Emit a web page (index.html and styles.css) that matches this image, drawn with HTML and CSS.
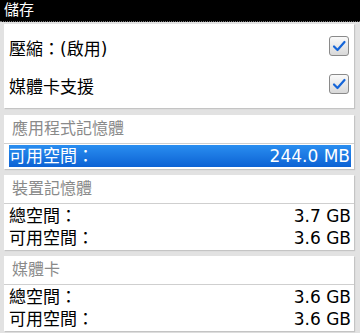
FILE: index.html
```html
<!DOCTYPE html>
<html lang="zh-Hant">
<head>
<meta charset="UTF-8">
<meta name="viewport" content="width=device-width, initial-scale=1.0">
<title>儲存</title>
<link rel="stylesheet" href="styles.css">
</head>
<body>
<div class="titlebar">儲存</div>

<div class="list">
  <div class="card opts">
    <div class="opt">
      <span>壓縮：(啟用)</span>
      <span class="check"><svg viewBox="0 0 18 18" width="18" height="18"><path d="M4 9.5 L7.5 13 L14.5 5" fill="none" stroke="#1565d8" stroke-width="2.2" stroke-linecap="round" stroke-linejoin="round"/></svg></span>
    </div>
    <div class="opt">
      <span>媒體卡支援</span>
      <span class="check"><svg viewBox="0 0 18 18" width="18" height="18"><path d="M4 9.5 L7.5 13 L14.5 5" fill="none" stroke="#1565d8" stroke-width="2.2" stroke-linecap="round" stroke-linejoin="round"/></svg></span>
    </div>
  </div>

  <div class="card">
    <div class="head">應用程式記憶體</div>
    <div class="rows single">
      <div class="row sel"><span>可用空間：</span><span>244.0 MB</span></div>
    </div>
  </div>

  <div class="card">
    <div class="head">裝置記憶體</div>
    <div class="rows">
      <div class="row"><span>總空間：</span><span>3.7 GB</span></div>
      <div class="row"><span>可用空間：</span><span>3.6 GB</span></div>
    </div>
  </div>

  <div class="card">
    <div class="head">媒體卡</div>
    <div class="rows">
      <div class="row"><span>總空間：</span><span>3.6 GB</span></div>
      <div class="row"><span>可用空間：</span><span>3.6 GB</span></div>
    </div>
  </div>
</div>
</body>
</html>
```
FILE: styles.css
```css
body{margin:0;background:#e2e2e2;font-family:"DejaVu Sans","Noto Sans CJK TC",sans-serif;color:#000;height:333px;overflow:hidden;}
.titlebar{background:#000;color:#fff;font-size:15px;height:21px;line-height:20px;padding-left:4px;border-bottom:1px dotted #777;}
.list{display:flex;flex-direction:column;gap:6px;padding:2px 6px 0 4px;}
.card{background:#fff;box-shadow:1px 1px 1px #c4c4c4;}
.opts{padding:4px 0;margin-bottom:1px;}
.opt{display:flex;justify-content:space-between;align-items:center;height:38px;padding:0 5px 0 5px;font-size:17px;}
.check{width:18px;height:18px;border:1px solid #8a8a8a;border-radius:3px;background:linear-gradient(#fafafa,#d8d8d8);display:flex;align-items:center;justify-content:center;margin-top:-3px;}
.check svg{display:block;}
.head{height:28px;line-height:28px;padding-left:8px;font-size:16px;color:#8a8a8a;border-bottom:1px solid #cfcfcf;}
.rows{padding:1px 3px 1px 5px;}
.rows.single{padding-bottom:2px;}
.row{display:flex;justify-content:space-between;height:22px;line-height:22px;font-size:17px;}
.sel{background:linear-gradient(#2a8ef0,#0c62d4);color:#fff;padding-right:1px;}
```
